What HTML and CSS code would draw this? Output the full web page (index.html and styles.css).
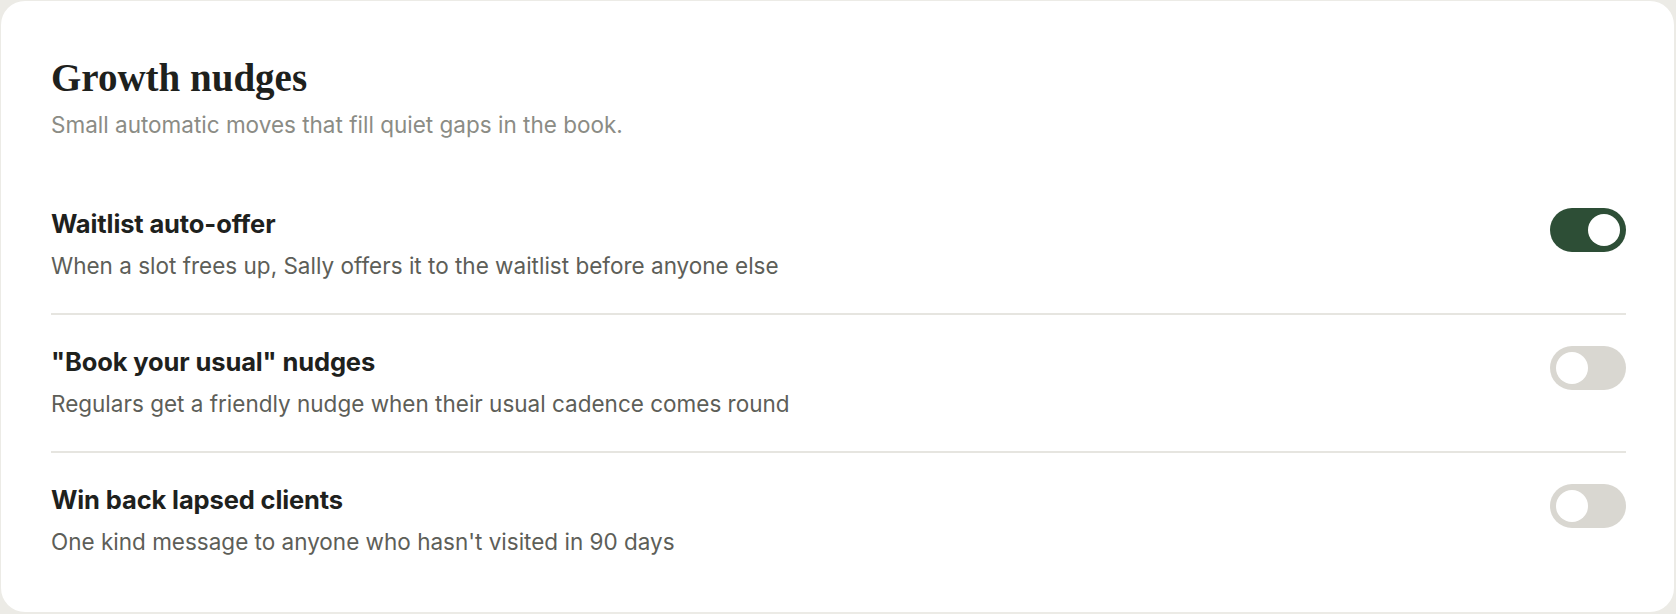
FILE: index.html
```html
<!doctype html>
<html lang="en">
  <head>
    <meta charset="UTF-8" />
    <meta name="viewport" content="width=device-width, initial-scale=1.0" />
    <title>Growth nudges</title>
    <link rel="stylesheet" href="styles.css">
  </head>
  <body>
    <section class="settings-card">
      <header class="card-header">
        <h2 class="card-title">Growth nudges</h2>
        <p class="card-subtitle">Small automatic moves that fill quiet gaps in the book.</p>
      </header>

      <ul class="nudge-list">
        <li class="nudge-row">
          <div class="nudge-text">
            <h3 class="nudge-name">Waitlist auto-offer</h3>
            <p class="nudge-desc">When a slot frees up, Sally offers it to the waitlist before anyone else</p>
          </div>
          <button class="toggle is-on" role="switch" aria-checked="true" aria-label="Waitlist auto-offer">
            <span class="toggle-knob"></span>
          </button>
        </li>
        <li class="nudge-row">
          <div class="nudge-text">
            <h3 class="nudge-name">"Book your usual" nudges</h3>
            <p class="nudge-desc">Regulars get a friendly nudge when their usual cadence comes round</p>
          </div>
          <button class="toggle" role="switch" aria-checked="false" aria-label="Book your usual nudges">
            <span class="toggle-knob"></span>
          </button>
        </li>
        <li class="nudge-row">
          <div class="nudge-text">
            <h3 class="nudge-name">Win back lapsed clients</h3>
            <p class="nudge-desc">One kind message to anyone who hasn't visited in 90 days</p>
          </div>
          <button class="toggle" role="switch" aria-checked="false" aria-label="Win back lapsed clients">
            <span class="toggle-knob"></span>
          </button>
        </li>
      </ul>
    </section>

    <script>
      document.querySelectorAll(".toggle").forEach(function (toggle) {
        toggle.addEventListener("click", function () {
          const on = toggle.classList.toggle("is-on");
          toggle.setAttribute("aria-checked", on ? "true" : "false");
        });
      });
    </script>
  </body>
</html>
```

FILE: styles.css
```css
* {
  margin: 0;
  padding: 0;
  box-sizing: border-box;
}

body {
  font-family: "Inter", "Noto Sans", sans-serif;
  background: #ecebe6;
  padding: 1px 2px 2px 1px;
  min-height: 100vh;
}

.settings-card {
  background: #ffffff;
  border-radius: 24px;
  height: 611px;
  padding: 54px 48px 0 50px;
}

.card-title {
  font-family: "Liberation Serif", serif;
  font-size: 39px;
  line-height: 1.2;
  font-weight: 700;
  color: #1e211d;
}

.card-subtitle {
  margin-top: 7px;
  font-size: 22.5px;
  line-height: 32px;
  color: #8b8c85;
}

.nudge-list {
  list-style: none;
  margin-top: 36px;
}

.nudge-row {
  display: flex;
  justify-content: space-between;
  align-items: flex-start;
  gap: 40px;
  padding: 31px 0;
  border-bottom: 2px solid #e6e5e0;
}

.nudge-row:last-child {
  border-bottom: none;
}

.nudge-name {
  font-size: 25.5px;
  line-height: 32px;
  font-weight: 700;
  letter-spacing: -0.005em;
  color: #1e211d;
}

.nudge-desc {
  margin-top: 10px;
  font-size: 22.5px;
  line-height: 32px;
  color: #5d5e58;
}

.toggle {
  flex: none;
  position: relative;
  width: 76px;
  height: 44px;
  border: none;
  border-radius: 22px;
  background: #d9d7d1;
  cursor: pointer;
  transition: background 0.2s ease;
}

.toggle-knob {
  position: absolute;
  top: 6px;
  left: 6px;
  width: 32px;
  height: 32px;
  border-radius: 50%;
  background: #ffffff;
  transition: transform 0.2s ease;
}

.toggle.is-on {
  background: #2d4e36;
}

.toggle.is-on .toggle-knob {
  transform: translateX(32px);
}
```
